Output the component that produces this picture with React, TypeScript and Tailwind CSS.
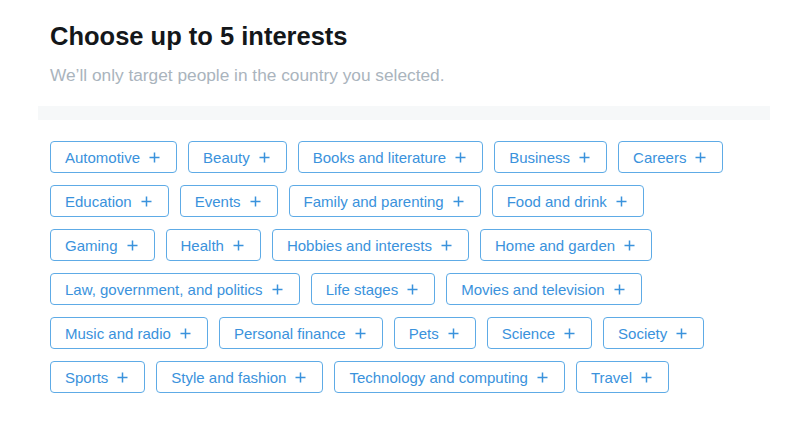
import React from "react";

const rows: string[][] = [
  ["Automotive", "Beauty", "Books and literature", "Business", "Careers"],
  ["Education", "Events", "Family and parenting", "Food and drink"],
  ["Gaming", "Health", "Hobbies and interests", "Home and garden"],
  ["Law, government, and politics", "Life stages", "Movies and television"],
  ["Music and radio", "Personal finance", "Pets", "Science", "Society"],
  ["Sports", "Style and fashion", "Technology and computing", "Travel"],
];

function Plus() {
  return (
    <svg width="11" height="11" viewBox="0 0 11 11" className="ml-[9px] shrink-0" fill="none">
      <path d="M5.5 0.5v10M0.5 5.5h10" stroke="#3a92dc" strokeWidth="1.5" />
    </svg>
  );
}

export default function App() {
  return (
    <div
      className="w-[800px] h-[441px] bg-white overflow-hidden"
      style={{ fontFamily: '"Liberation Sans", Arial, Helvetica, sans-serif' }}
    >
      <div className="pt-[21px] px-[38px]">
        <div className="pl-[12px]">
          <h1 className="text-[25.5px] leading-[30px] font-bold text-[#14171a]">
            Choose up to 5 interests
          </h1>
          <p className="mt-[12px] text-[17.3px] leading-[24px] text-[#aab4bd]">
            We’ll only target people in the country you selected.
          </p>
        </div>
        <div className="mt-[19px] h-[14px] w-[732px] bg-[#f6f8f9]" />
        <div className="mt-[21px] pl-[12px] flex flex-col gap-[12px]">
          {rows.map((row, i) => (
            <div key={i} className="flex gap-[11px]">
              {row.map((label) => (
                <button
                  key={label}
                  className="h-[32px] flex items-center border border-[#5eabe6] rounded-[4px] pl-[14px] pr-[16px] text-[15px] leading-none text-[#3a92dc] bg-white whitespace-nowrap"
                >
                  <span>{label}</span>
                  <Plus />
                </button>
              ))}
            </div>
          ))}
        </div>
      </div>
    </div>
  );
}
